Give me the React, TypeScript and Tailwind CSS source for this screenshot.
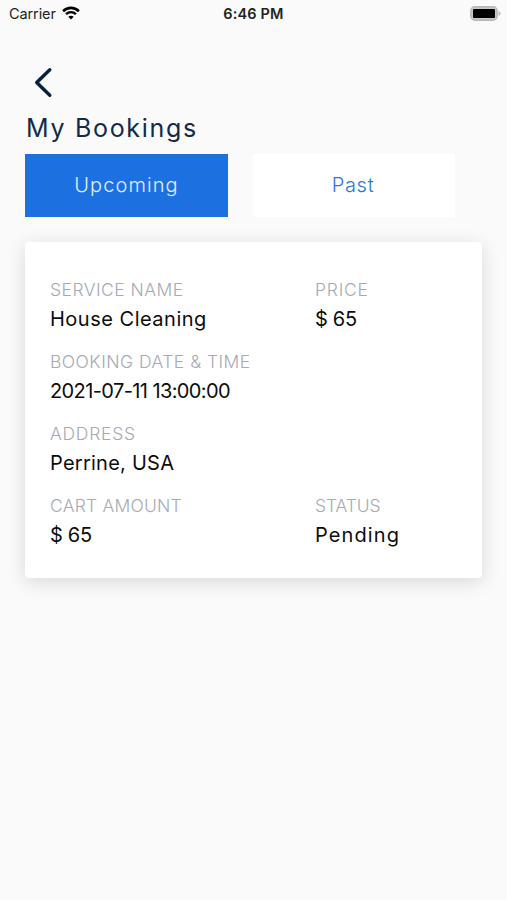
type Field = {
  label: string;
  value: string;
  labelClass: string;
  valueClass: string;
};

type Row = Field[];

const booking: Row[] = [
  [
    { label: "SERVICE NAME", value: "House Cleaning", labelClass: "tracking-[0.48px]", valueClass: "tracking-[0.5px]" },
    { label: "PRICE", value: "$ 65", labelClass: "tracking-[0.8px]", valueClass: "tracking-[-0.3px]" },
  ],
  [
    {
      label: "BOOKING DATE & TIME",
      value: "2021-07-11 13:00:00",
      labelClass: "tracking-[0.48px]",
      valueClass: "tracking-[-0.6px]",
    },
  ],
  [{ label: "ADDRESS", value: "Perrine, USA", labelClass: "tracking-[0.75px]", valueClass: "tracking-[0.25px]" }],
  [
    { label: "CART AMOUNT", value: "$ 65", labelClass: "tracking-[0.22px]", valueClass: "tracking-[-0.3px]" },
    { label: "STATUS", value: "Pending", labelClass: "tracking-[-0.1px]", valueClass: "tracking-[1.1px]" },
  ],
];

function StatusBar() {
  return (
    <header className="grid h-7 grid-cols-3 items-center pr-[6px] pl-[9px] text-[14.5px] text-[#222]">
      <div className="flex items-center gap-[6px]">
        <span className="tracking-[-0.1px]">Carrier</span>
        <svg className="mb-[2px] h-[14px] w-[18px]" viewBox="0 0 18 14" fill="none" aria-label="Wi-Fi">
          <path d="M1.100 5.200C5.600.8 12.400.8 16.900 5.200" stroke="#000" strokeWidth="2.6" />
          <path d="M4 8.200c2.900-2.700 7.100-2.700 10 0" stroke="#000" strokeWidth="2.400" />
          <path d="M6.300 10.800c1.500-1.500 3.900-1.500 5.400 0L9 13.600Z" fill="#000" />
        </svg>
      </div>
      <time className="mr-[3px] text-center font-semibold tracking-[0.15px] whitespace-nowrap">6:46 PM</time>
      <svg className="mb-[2px] h-[15px] w-[31px] justify-self-end" viewBox="0 0 31 15" aria-label="Battery full">
        <rect x="0.9" y="0.9" width="26.200" height="13.2" rx="4" fill="#c9c9c9" stroke="#b8b8b8" strokeWidth="1.6" />
        <rect x="3" y="3" width="22" height="9" rx="1" fill="#000" />
        <path d="M28.600 5v5c1.100-.5 1.900-1.400 1.900-2.500S29.700 5.500 28.600 5Z" fill="#b5b5b5" />
      </svg>
    </header>
  );
}

function BookingField({ label, value, labelClass, valueClass }: Field) {
  return (
    <div className="whitespace-nowrap">
      <dt className={`text-[17.5px] leading-[29px] font-light text-[#a6aab2] ${labelClass}`}>{label}</dt>
      <dd className={`text-[20px] leading-[30px] text-[#0c0c0c] ${valueClass}`}>{value}</dd>
    </div>
  );
}

export default function App() {
  return (
    <div className="h-[900px] w-[507px] overflow-hidden bg-[#fafafa] font-['Inter','Liberation_Sans',sans-serif]">
      <StatusBar />

      <main className="px-[25px]">
        <button type="button" aria-label="Back" className="mt-[39px] ml-[8px] block">
          <svg
            className="h-[31px] w-[20px]"
            viewBox="0 0 20 31"
            fill="none"
            stroke="#08213f"
            strokeWidth="3.4"
            strokeLinecap="round"
            strokeLinejoin="round"
          >
            <path d="M16.800 2.700 3.700 15.500 16.800 28.300" />
          </svg>
        </button>

        <h1 className="mt-[14px] pl-px text-[25px] leading-8 tracking-[1.7px] text-[#122b4a]">My Bookings</h1>

        <div className="mt-[10px] flex h-[63px] gap-[25px] text-[20px]">
          <button type="button" className="w-[203px] bg-[#1d70df] pb-px font-light tracking-[1.1px] text-[#e1edff]">
            Upcoming
          </button>
          <button type="button" className="w-[202px] bg-white pr-[2px] pb-px font-light tracking-[0.7px] text-[#2878dd]">
            Past
          </button>
        </div>

        <section className="mt-[25px] h-[336px] w-[457px] rounded-[4px] bg-white px-[25px] pt-[33px] shadow-[0_4px_18px_1px_rgba(0,0,0,0.12)]">
          <dl className="flex flex-col gap-[13px]">
            {booking.map((row) => (
              <div key={row[0].label} className="grid grid-cols-[265px_1fr]">
                {row.map((field) => (
                  <BookingField key={field.label} {...field} />
                ))}
              </div>
            ))}
          </dl>
        </section>
      </main>
    </div>
  );
}
